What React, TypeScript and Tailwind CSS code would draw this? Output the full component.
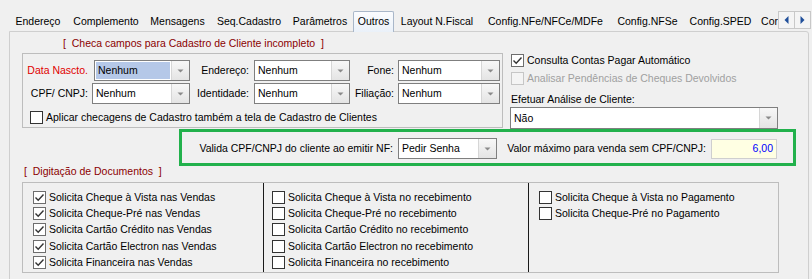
import React from "react";

function Arrow() {
  return (
    <svg width="7" height="4" viewBox="0 0 7 4">
      <path d="M0.5 0.5 H6.5 L3.5 3.5 Z" fill="#8a8a8a" />
    </svg>
  );
}

function Combo({
  w,
  text,
  selected,
  h = "h-[21px]",
}: {
  w: string;
  text: string;
  selected?: boolean;
  h?: string;
}) {
  return (
    <div className={`${w} ${h} flex border border-[#7f7f7f] bg-white`}>
      <div className="flex-1 flex items-center p-[1px] min-w-0">
        <div
          className={`h-full w-full flex items-center pl-[2px] ${
            selected ? "bg-[#b5c8e8]" : ""
          }`}
        >
          {text}
        </div>
      </div>
      <div className="w-[18px] h-full border-l border-[#d6d6d6] bg-gradient-to-b from-[#f7f7f7] to-[#e4e4e4] flex items-center justify-center">
        <Arrow />
      </div>
    </div>
  );
}

function Check({ checked, disabled }: { checked?: boolean; disabled?: boolean }) {
  const border = disabled ? "border-[#c6c6c6]" : checked ? "border-[#6e6e6e]" : "border-[#333333]";
  return (
    <div
      className={`w-[13px] h-[13px] border ${border} ${
        disabled ? "bg-[#f4f4f4]" : "bg-white"
      } flex items-center justify-center shrink-0`}
    >
      {checked && (
        <svg width="11" height="11" viewBox="0 0 11 11">
          <path d="M1.5 5.5 L4.2 8.2 L9.5 2.5" stroke="#333" strokeWidth="1.4" fill="none" />
        </svg>
      )}
    </div>
  );
}

function CheckRow({
  label,
  checked,
  disabled,
}: {
  label: string;
  checked?: boolean;
  disabled?: boolean;
}) {
  return (
    <div className="flex items-center gap-[3px] h-[16.3px]">
      <Check checked={checked} disabled={disabled} />
      <span className={`whitespace-nowrap ${disabled ? "text-[#a0a0a0]" : ""}`}>{label}</span>
    </div>
  );
}

const tabs: { label: string; w: string; active?: boolean }[] = [
  { label: "Endereço", w: "w-[60px]" },
  { label: "Complemento", w: "w-[76px]" },
  { label: "Mensagens", w: "w-[67px]" },
  { label: "Seq.Cadastro", w: "w-[76px]" },
  { label: "Parâmetros", w: "w-[66px]" },
  { label: "Outros", w: "w-[41px]", active: true },
  { label: "Layout N.Fiscal", w: "w-[86px]" },
  { label: "Config.NFe/NFCe/MDFe", w: "w-[131px]" },
  { label: "Config.NFSe", w: "w-[73px]" },
  { label: "Config.SPED", w: "w-[73px]" },
];

export default function App() {
  const col1 = [
    "Solicita Cheque à Vista nas Vendas",
    "Solicita Cheque-Pré nas Vendas",
    "Solicita Cartão Crédito nas Vendas",
    "Solicita Cartão Electron nas Vendas",
    "Solicita Financeira nas Vendas",
  ];
  const col2 = [
    "Solicita Cheque à Vista no recebimento",
    "Solicita Cheque-Pré no recebimento",
    "Solicita Cartão Crédito no recebimento",
    "Solicita Cartão Electron no recebimento",
    "Solicita Financeira no recebimento",
  ];
  const col3 = ["Solicita Cheque à Vista no Pagamento", "Solicita Cheque-Pré no Pagamento"];

  return (
    <div className="w-[812px] h-[279px] bg-[#f0f0f0] overflow-hidden relative text-[10.5px] leading-[13px] text-black font-['Liberation_Sans',Arial,sans-serif]">
      {/* Tab strip */}
      <div className="relative h-[31px] flex items-end pl-[8px]">
        {tabs.map((t) =>
          t.active ? (
            <div
              key={t.label}
              className={`${t.w} shrink-0 h-[21px] mb-[-1px] relative z-10 border border-b-0 border-[#a9b7c9] rounded-t-[2px] bg-gradient-to-b from-[#fbfcfe] to-[#eaf1f9] flex items-start justify-center pt-[3px]`}
            >
              {t.label}
            </div>
          ) : (
            <div
              key={t.label}
              className={`${t.w} shrink-0 h-[19px] flex items-center justify-center whitespace-nowrap`}
            >
              {t.label}
            </div>
          )
        )}
        <div className="w-[21px] shrink-0 h-[19px] flex items-center justify-end whitespace-nowrap">
          Cor
        </div>
        <div className="ml-auto mb-[2px] mr-[1px] self-end flex bg-[#f0f0f0]">
          <div className="w-[17px] h-[18px] border border-[#c8c8c8] bg-[#f4f4f4] flex items-center justify-center">
            <svg width="5" height="8" viewBox="0 0 5 8">
              <path d="M4.5 0 V8 L0.5 4 Z" fill="#1f4e9a" />
            </svg>
          </div>
          <div className="w-[16px] h-[18px] border border-l-0 border-[#c8c8c8] bg-[#f4f4f4] flex items-center justify-center">
            <svg width="5" height="8" viewBox="0 0 5 8">
              <path d="M0.5 0 V8 L4.5 4 Z" fill="#1f4e9a" />
            </svg>
          </div>
        </div>
      </div>

      {/* Panel */}
      <div className="ml-[9px] w-[800px] h-[260px] border border-[#cfcfcf] rounded-tr-[3px] flex flex-col">
        <div className="ml-[53px] mt-[4px] h-[14px] leading-[14px] text-[#8b0000] whitespace-nowrap">
          [ &nbsp;Checa campos para Cadastro de Cliente incompleto &nbsp;]
        </div>

        <div className="mt-[3px] flex">
          {/* left group */}
          <div className="ml-[12px] w-[481px] h-[75px] border border-[#bdbdbd] flex flex-col pt-[6px]">
            <div className="flex items-center h-[21px]">
              <div className="w-[65px] text-right text-[#e00000] whitespace-nowrap">Data Nascto.</div>
              <div className="ml-[6px]">
                <Combo w="w-[96px]" text="Nenhum" selected />
              </div>
              <div className="w-[59px] text-right whitespace-nowrap">Endereço:</div>
              <div className="ml-[5px]">
                <Combo w="w-[96px]" text="Nenhum" />
              </div>
              <div className="w-[44px] text-right whitespace-nowrap">Fone:</div>
              <div className="ml-[4px]">
                <Combo w="w-[102px]" text="Nenhum" />
              </div>
            </div>
            <div className="flex items-center h-[21px] mt-[2px]">
              <div className="w-[65px] text-right whitespace-nowrap">CPF/ CNPJ:</div>
              <div className="ml-[4px]">
                <Combo w="w-[98px]" text="Nenhum" />
              </div>
              <div className="w-[59px] text-right whitespace-nowrap">Identidade:</div>
              <div className="ml-[5px]">
                <Combo w="w-[96px]" text="Nenhum" />
              </div>
              <div className="w-[44px] text-right whitespace-nowrap">Filiação:</div>
              <div className="ml-[4px]">
                <Combo w="w-[102px]" text="Nenhum" />
              </div>
            </div>
            <div className="mt-[6px] ml-[7px] flex items-center gap-[3px] h-[14px]">
              <Check />
              <span className="whitespace-nowrap">
                Aplicar checagens de Cadastro também a tela de Cadastro de Clientes
              </span>
            </div>
          </div>

          {/* right column */}
          <div className="ml-[7px] w-[268px] h-[76px] flex flex-col">
            <div className="ml-[1px] h-[14px] flex items-center">
              <CheckRow label="Consulta Contas Pagar Automático" checked />
            </div>
            <div className="ml-[1px] mt-[4px] h-[14px] flex items-center">
              <CheckRow label="Analisar Pendências de Cheques Devolvidos" disabled />
            </div>
            <div className="ml-[1px] mt-[7px] h-[14px] leading-[14px] whitespace-nowrap">
              Efetuar Análise de Cliente:
            </div>
            <div className="mt-[1px]">
              <Combo w="w-[268px]" h="h-[22px]" text="Não" />
            </div>
          </div>
        </div>

        {/* Valida row */}
        <div className="mt-[9px] h-[21px] flex items-center">
          <div className="ml-[180px] w-[203px] text-right whitespace-nowrap">
            Valida CPF/CNPJ do cliente ao emitir NF:
          </div>
          <div className="ml-[5px]">
            <Combo w="w-[99px]" text="Pedir Senha" />
          </div>
          <div className="ml-[10px] w-[199px] text-right whitespace-nowrap">
            Valor máximo para venda sem CPF/CNPJ:
          </div>
          <div className="ml-[5px] w-[66px] h-[20px] border border-[#cfcfcf] bg-[#ffffe3] flex items-center justify-end pr-[3px] text-[#0000ff]">
            6,00
          </div>
        </div>

        <div className="ml-[14px] mt-[5px] h-[14px] leading-[14px] text-[#8b0000] whitespace-nowrap">
          [ &nbsp;Digitação de Documentos &nbsp;]
        </div>

        {/* bottom group */}
        <div className="ml-[12px] mt-[4px] w-[757px] h-[91px] border border-[#bdbdbd] flex">
          <div className="w-[240px] h-full pl-[10px] pt-[6px] flex flex-col">
            {col1.map((l) => (
              <CheckRow key={l} label={l} checked />
            ))}
          </div>
          <div className="w-[265px] h-full border-l border-[#1a1a1a] pl-[8px] pt-[6px] flex flex-col">
            {col2.map((l) => (
              <CheckRow key={l} label={l} />
            ))}
          </div>
          <div className="flex-1 h-full border-l border-[#1a1a1a] pl-[10px] pt-[6px] flex flex-col">
            {col3.map((l) => (
              <CheckRow key={l} label={l} />
            ))}
          </div>
        </div>
      </div>

      {/* green annotation overlay */}
      <div className="absolute left-[179px] top-[129px] w-[617px] h-[37px] border-[3px] border-[#22b14c] pointer-events-none" />
    </div>
  );
}
